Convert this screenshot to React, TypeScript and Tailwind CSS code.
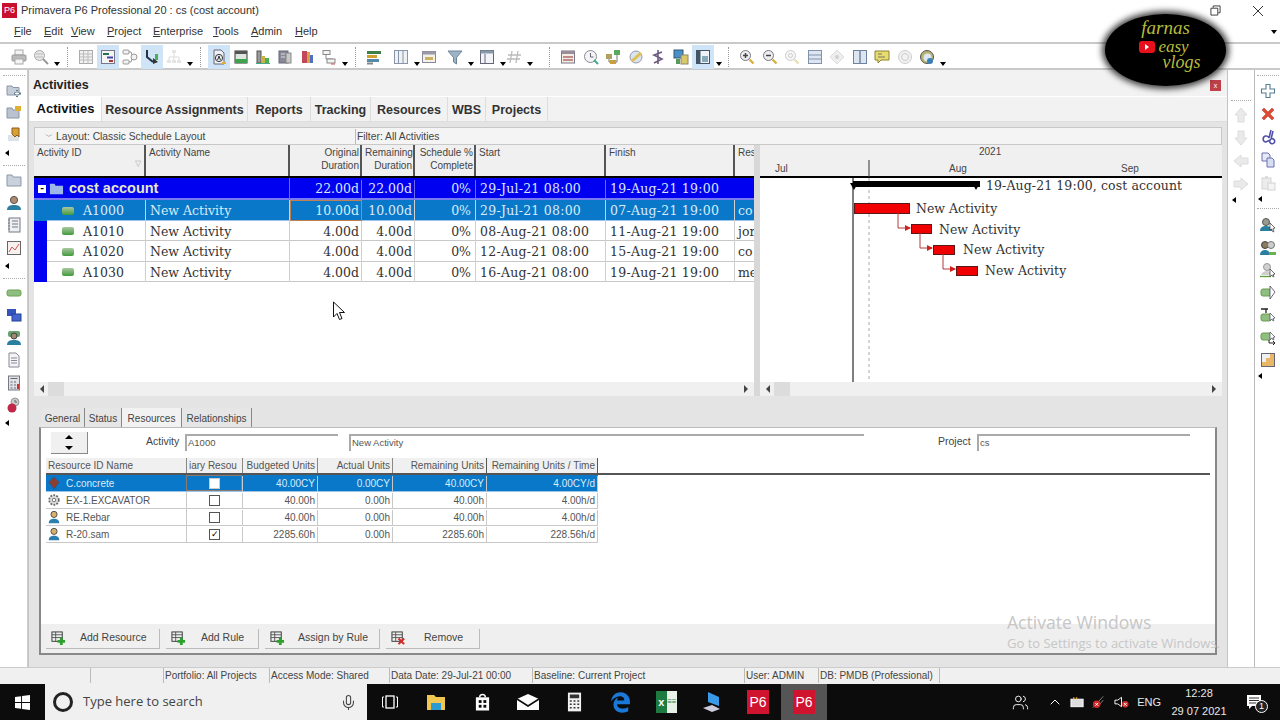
import type { ReactNode } from "react";
import { ChevronUp, Mic, Users } from "lucide-react";
import { FaEdgeLegacy } from "react-icons/fa6";

const sans = "[font-family:'Liberation_Sans',Arial,sans-serif]";
const serif = "[font-family:'DejaVu_Serif',serif]";

const Svg = ({ children, s = 16 }: { children: ReactNode; s?: number }) => (
  <svg viewBox="0 0 16 16" width={s} height={s} className="shrink-0">
    {children}
  </svg>
);

const icons: Record<string, ReactNode> = {
  printer: (
    <>
      <rect x="4" y="1" width="8" height="5" fill="#f4f4f4" stroke="#aaa" />
      <rect x="1" y="6" width="14" height="6" rx="1" fill="#bbb" stroke="#999" />
      <rect x="4" y="10" width="8" height="5" fill="#f4f4f4" stroke="#aaa" />
    </>
  ),
  preview: (
    <>
      <circle cx="6.5" cy="6.5" r="5" fill="#e6e6e6" stroke="#aaa" />
      <path d="M3 5h7M3 8h7" stroke="#bbb" />
      <path d="M10 10l5 5" stroke="#999" strokeWidth="2" />
    </>
  ),
  table: (
    <>
      <rect x="1.5" y="1.5" width="13" height="13" fill="#f2f2f2" stroke="#aaa" />
      <path d="M1.5 5h13M1.5 8h13M1.5 11h13M5.5 1.5v13M10 1.5v13" stroke="#bbb" />
    </>
  ),
  gantt: (
    <>
      <rect x="1.5" y="1.5" width="13" height="13" fill="#f4f4f4" stroke="#778" />
      <rect x="3" y="4" width="6" height="2" fill="#2a6f50" />
      <rect x="7" y="7.5" width="6" height="2" fill="#44a" />
      <rect x="9" y="11" width="4" height="2" fill="#a33" />
    </>
  ),
  net: (
    <>
      <rect x="1" y="1" width="6" height="4" rx="1" fill="#f2f2f2" stroke="#999" />
      <rect x="1" y="11" width="6" height="4" rx="1" fill="#f2f2f2" stroke="#999" />
      <circle cx="12" cy="8" r="3" fill="#f2f2f2" stroke="#999" />
      <path d="M7 3h2l1 3M7 13h2l1-3" stroke="#999" fill="none" />
    </>
  ),
  step: (
    <>
      <path d="M3 1v7l6 5" stroke="#234" strokeWidth="2" fill="none" />
      <path d="M9 9l5 4-5 2z" fill="#333" />
      <rect x="11" y="5" width="3" height="6" fill="#4caf50" />
    </>
  ),
  org: (
    <>
      <rect x="6" y="1" width="4" height="3" fill="#e4e4e4" />
      <path d="M8 4v4M3 8h10M3 8v3M8 8v3M13 8v3" stroke="#ddd" />
      <rect x="1" y="11" width="4" height="3" fill="#e4e4e4" />
      <rect x="6" y="11" width="4" height="3" fill="#e4e4e4" />
      <rect x="11" y="11" width="4" height="3" fill="#e4e4e4" />
    </>
  ),
  docA: (
    <>
      <path d="M3 1h7l3 3v11H3z" fill="#eef2f8" stroke="#667" />
      <circle cx="8" cy="9" r="3.6" fill="none" stroke="#333" />
      <path d="M6.6 11l1.4-4 1.4 4" stroke="#333" fill="none" />
      <rect x="11" y="13" width="4" height="2" fill="#e0b030" />
    </>
  ),
  greenBox: (
    <>
      <rect x="2" y="2" width="12" height="12" fill="#dfe6e0" stroke="#333" />
      <rect x="2" y="2" width="12" height="3" fill="#555" />
      <rect x="2" y="10" width="12" height="4" fill="#3fa24e" />
    </>
  ),
  bars: (
    <>
      <rect x="2" y="2" width="4" height="12" fill="#999" stroke="#555" />
      <rect x="7" y="7" width="3" height="7" fill="#c9b24a" />
      <rect x="10" y="9" width="4" height="5" fill="#4caf50" />
      <path d="M1 14.5h14" stroke="#4a8" />
    </>
  ),
  docs: (
    <>
      <rect x="2" y="2" width="9" height="12" fill="#889" stroke="#667" />
      <rect x="9" y="4" width="5" height="10" fill="#c9c9c9" stroke="#888" />
      <path d="M4 5h4M4 8h4" stroke="#ddd" />
    </>
  ),
  people: (
    <>
      <rect x="3" y="2" width="5" height="12" fill="#c0485a" />
      <rect x="8" y="3" width="3" height="11" fill="#e0a040" />
      <rect x="11" y="6" width="3" height="8" fill="#5070c0" />
    </>
  ),
  flow: (
    <>
      <rect x="2" y="1.5" width="7" height="4" fill="#f4f4f4" stroke="#888" />
      <path d="M5 6v4h7" stroke="#888" fill="none" />
      <rect x="6" y="10" width="8" height="4" fill="#f4f4f4" stroke="#888" />
      <path d="M10 15h4" stroke="#c55" />
    </>
  ),
  align: (
    <>
      <rect x="1" y="2" width="14" height="3" fill="#3f7f4a" />
      <rect x="1" y="6" width="10" height="3" fill="#d0a030" />
      <rect x="1" y="10" width="12" height="3" fill="#58a" />
      <rect x="1" y="13.5" width="6" height="2" fill="#888" />
    </>
  ),
  cols: (
    <>
      <rect x="1.5" y="1.5" width="13" height="13" fill="#eef1f6" stroke="#8894a8" />
      <path d="M5.5 1.5v13M10 1.5v13" stroke="#8894a8" />
    </>
  ),
  group: (
    <>
      <rect x="1.5" y="2.5" width="13" height="11" fill="#f2f2ea" stroke="#889" />
      <rect x="1.5" y="2.5" width="13" height="3" fill="#99a" />
      <rect x="4" y="8" width="8" height="3" fill="#d0b060" />
    </>
  ),
  filter: <path d="M1 2h14L9.5 8.5V15l-3-2V8.5z" fill="#9db4c8" stroke="#6d8496" />,
  layout: (
    <>
      <rect x="1.5" y="1.5" width="13" height="13" fill="#f2f4f7" stroke="#667" />
      <rect x="1.5" y="1.5" width="13" height="3" fill="#8899aa" />
      <path d="M6 5v9.5" stroke="#667" />
    </>
  ),
  hash: <path d="M6 2L4 14M12 2l-2 12M2 6h13M1 10h13" stroke="#bbb" strokeWidth="1.3" fill="none" />,
  tablePink: (
    <>
      <rect x="1.5" y="2" width="13" height="12" fill="#f3efe4" stroke="#778" />
      <rect x="1.5" y="2" width="13" height="3" fill="#9a8c98" />
      <path d="M3 8h10M3 11h10" stroke="#b06a6a" strokeWidth="1.5" />
    </>
  ),
  clock: (
    <>
      <circle cx="7.5" cy="7.5" r="6" fill="#f4f4f4" stroke="#889" />
      <path d="M7.5 4v4h3" stroke="#667" fill="none" />
      <path d="M11 11l4 4" stroke="#4a8" strokeWidth="2" />
    </>
  ),
  tree: (
    <>
      <rect x="9" y="1" width="6" height="5" fill="#5aa85a" />
      <rect x="1" y="5" width="6" height="5" fill="#b0a060" />
      <rect x="5" y="11" width="6" height="4" fill="#c8a040" />
      <path d="M4 10v3h1M12 6v7h-1" stroke="#777" fill="none" />
    </>
  ),
  ball: (
    <>
      <circle cx="8" cy="8" r="6" fill="#d9e4ee" stroke="#99a" />
      <path d="M4 12l9-8" stroke="#e0c050" strokeWidth="3" />
    </>
  ),
  dollar: <path d="M12 3L4 6l8 4-8 4M8 1v14" stroke="#6a5a80" strokeWidth="1.6" fill="none" />,
  pc: (
    <>
      <rect x="1" y="1" width="9" height="8" fill="#4a90c8" stroke="#357" />
      <rect x="8" y="6" width="7" height="9" fill="#d8c868" stroke="#887" />
      <rect x="3" y="10" width="4" height="5" fill="#5a9a5a" />
    </>
  ),
  panel: (
    <>
      <rect x="1.5" y="1.5" width="13" height="13" fill="#f0f4f8" stroke="#456" />
      <rect x="1.5" y="1.5" width="4" height="13" fill="#456" />
      <rect x="7" y="7" width="6" height="6" fill="#8ab" />
    </>
  ),
  zoomIn: (
    <>
      <circle cx="6.5" cy="6.5" r="5" fill="#eee" stroke="#778" />
      <path d="M4 6.5h5M6.5 4v5" stroke="#444" strokeWidth="1.5" />
      <path d="M10.5 10.5l4 4" stroke="#d8b040" strokeWidth="2.4" />
    </>
  ),
  zoomOut: (
    <>
      <circle cx="6.5" cy="6.5" r="5" fill="#eee" stroke="#778" />
      <path d="M4 6.5h5" stroke="#444" strokeWidth="1.5" />
      <path d="M10.5 10.5l4 4" stroke="#d8b040" strokeWidth="2.4" />
    </>
  ),
  zoomOff: (
    <>
      <circle cx="6.5" cy="6.5" r="5" fill="#f6f6f6" stroke="#ccc" />
      <circle cx="6.5" cy="6.5" r="2" fill="none" stroke="#ccc" />
      <path d="M10.5 10.5l4 4" stroke="#e8e0b0" strokeWidth="2.4" />
    </>
  ),
  rows: (
    <>
      <rect x="1.5" y="1.5" width="13" height="13" fill="#dde6f0" stroke="#7f93ad" />
      <path d="M1.5 6h13M1.5 10h13" stroke="#7f93ad" />
    </>
  ),
  diamond: (
    <>
      <path d="M8 1l7 7-7 7-7-7z" fill="#eee" stroke="#ddd" />
      <circle cx="8" cy="8" r="2" fill="#d0d0d0" />
    </>
  ),
  split: (
    <>
      <rect x="1.5" y="1.5" width="13" height="13" fill="#dde6f0" stroke="#6f83a0" />
      <path d="M8 1.5v13" stroke="#6f83a0" strokeWidth="1.5" />
    </>
  ),
  note: (
    <>
      <path d="M1 2h14v9H7l-3 3v-3H1z" fill="#e8dc70" stroke="#8a8230" />
      <path d="M4 5h4M4 8h7" stroke="#776" />
    </>
  ),
  helpOff: (
    <>
      <circle cx="8" cy="8" r="6.5" fill="#f2f2f2" stroke="#ccc" />
      <circle cx="8" cy="8" r="3.5" fill="none" stroke="#ccc" />
    </>
  ),
  help: (
    <>
      <circle cx="8" cy="8" r="6.5" fill="#b8b070" stroke="#555" />
      <circle cx="8.5" cy="8.5" r="4" fill="#dde8ee" />
      <circle cx="11" cy="12" r="3" fill="#3a80b8" />
    </>
  ),
  folderAdd: (
    <>
      <path d="M1 4h5l1 1.500h6V13H1z" fill="#c5cdd8" stroke="#8a96a6" />
      <path d="M11 8v7M8 11.500h7" stroke="#5a7a8a" strokeWidth="2" />
      <path d="M11 9v5M9 11.500h4" stroke="#fff" />
    </>
  ),
  folderOpen: (
    <>
      <path d="M1 3h5l1 2h6v8H1z" fill="#b9c2ce" stroke="#8a96a6" />
      <path d="M9 1h6v5H9z" fill="#e0b030" />
    </>
  ),
  marker: (
    <>
      <rect x="2" y="8" width="11" height="6" fill="#dde2e8" />
      <path d="M6 1h7v9l-2-2-2 2-3-3z" fill="#d8a030" stroke="#8a5a20" />
    </>
  ),
  folder: <path d="M1 3h5l1 2h8v9H1z" fill="#c9d1dc" stroke="#8d99a8" />,
  person: (
    <>
      <circle cx="8" cy="5" r="3.600" fill="#b08a70" stroke="#555" />
      <path d="M1 15c0-4 3-5 7-5s7 1 7 5z" fill="#2a7fa0" />
    </>
  ),
  notebook: (
    <>
      <rect x="3" y="1" width="11" height="14" fill="#eef0f2" stroke="#778" />
      <path d="M6 4h6M6 7h6M6 10h6M2 3h2M2 6h2M2 9h2M2 12h2" stroke="#778" />
    </>
  ),
  chart: (
    <>
      <rect x="1.500" y="1.500" width="13" height="13" fill="#f6f0ee" stroke="#666" />
      <path d="M3 12l3-5 3 3 4-6" stroke="#c55" fill="none" />
    </>
  ),
  bar: <rect x="1" y="5" width="14" height="6" rx="2" fill="#8fbf80" stroke="#6aa050" />,
  squares: (
    <>
      <rect x="1" y="2" width="9" height="7" fill="#3355bb" />
      <rect x="6" y="7" width="9" height="7" fill="#4466cc" stroke="#223f99" />
    </>
  ),
  personG: (
    <>
      <rect x="2" y="1" width="12" height="6" rx="2" fill="#6aa070" />
      <circle cx="8" cy="6" r="3" fill="#a08870" stroke="#444" />
      <path d="M1 15c0-4 3-5 7-5s7 1 7 5z" fill="#2a7fa0" />
    </>
  ),
  doc: (
    <>
      <path d="M3 1h7l3 3v11H3z" fill="#f4f4f4" stroke="#889" />
      <path d="M5 6h6M5 8.500h6M5 11h6" stroke="#889" />
    </>
  ),
  calc: (
    <>
      <rect x="2.500" y="1" width="11" height="14" fill="#e0e2e6" stroke="#778" />
      <path d="M4.500 3.500h7M4.500 7h2M8 7h2M4.500 10h2M8 10h2M4.500 13h2M8 13h2" stroke="#667" />
      <rect x="11" y="9" width="2" height="5" fill="#c33" />
    </>
  ),
  riskClock: (
    <>
      <circle cx="9" cy="5" r="4" fill="#c9c9c9" stroke="#999" />
      <circle cx="6" cy="11" r="4.500" fill="#c02848" />
      <path d="M9 3v2h2" stroke="#666" fill="none" />
    </>
  ),
  plus: <path d="M6 1.500h4v4.500h4.500v4H10v4.500H6V10H1.500V6H6z" fill="#fff" stroke="#557f90" strokeWidth="1.100" />,
  del: <path d="M2 4l2-2 4 4 4-4 2 2-4 4 4 4-2 2-4-4-4 4-2-2 4-4z" fill="#dd4a30" stroke="#b83020" strokeWidth=".5" />,
  scissors: <path d="M11 1L9 9M13 2l-2 8M9 9a3 3 0 1 0-3 4l4-2a2.500 2.500 0 1 0 1-1" stroke="#5050a8" strokeWidth="1.600" fill="none" />,
  copy: (
    <>
      <path d="M2 1h6l2 2v6H2z" fill="#e6eaf6" stroke="#6a70b0" />
      <path d="M7 6h5l2 2v7H7z" fill="#d8def2" stroke="#6a70b0" />
    </>
  ),
  paste: (
    <>
      <rect x="2" y="3" width="9" height="11" fill="#ececec" stroke="#d4d4d4" />
      <rect x="5" y="1" width="3" height="3" fill="#ddd" />
      <rect x="8" y="8" width="7" height="7" fill="#f4f4f4" stroke="#d4d4d4" />
    </>
  ),
  up: <path d="M8 1l6 7h-3v7H5V8H2z" fill="#eaeaea" stroke="#dcdcdc" />,
  down: <path d="M8 15l6-7h-3V1H5v7H2z" fill="#eaeaea" stroke="#dcdcdc" />,
  left: <path d="M1 8l7-6v3h7v6H8v3z" fill="#eaeaea" stroke="#dcdcdc" />,
  right: <path d="M15 8L8 2v3H1v6h7v3z" fill="#eaeaea" stroke="#dcdcdc" />,
  res1: (
    <>
      <circle cx="6" cy="5" r="3.500" fill="#9a9a90" stroke="#555" />
      <path d="M0 14c0-4 3-5 6-5s5 1 6 3v2z" fill="#2a7fa0" />
      <path d="M10 6l5 5-2 .5 1 3-1 .5-1.500-3L10 13z" fill="#fff" stroke="#333" strokeWidth=".7" />
    </>
  ),
  res2: (
    <>
      <circle cx="5" cy="5" r="3.500" fill="#8a7a60" stroke="#444" />
      <circle cx="11" cy="5" r="3.500" fill="#ccc" stroke="#777" />
      <path d="M0 15c0-4 3-5 5-5s5 1 5 5z" fill="#2a7fa0" />
      <path d="M9 12h7v3H9z" fill="#6ab04c" />
    </>
  ),
  res3: (
    <>
      <circle cx="7" cy="5" r="3.500" fill="#d0d0d0" stroke="#999" />
      <path d="M1 13c1-3 3-4 6-4s3 1 4 4z" fill="#cfcfcf" />
      <path d="M0 14.500h11" stroke="#5aa03c" strokeWidth="1.300" />
      <path d="M10 7l5 5-2 .5 1 2-1 .5-1-2-2 1.500z" fill="#fff" stroke="#333" strokeWidth=".7" />
    </>
  ),
  res4: (
    <>
      <rect x="1" y="4" width="10" height="7" rx="2" fill="#8fbf80" stroke="#6a9a50" />
      <path d="M10 1l5 6-5 7z" fill="#fff" stroke="#445" strokeWidth=".8" />
    </>
  ),
  res5: (
    <>
      <path d="M1 2h7M6 2v4" stroke="#222" strokeWidth="1.300" fill="none" />
      <rect x="1" y="7" width="10" height="7" rx="2" fill="#8fbf80" stroke="#6a9a50" />
      <path d="M10 6l5 5-2 .5 1 2-1 .5-1-2-2 1.500z" fill="#fff" stroke="#445" strokeWidth=".7" />
    </>
  ),
  res6: (
    <>
      <rect x="1" y="3" width="10" height="7" rx="2" fill="#8fbf80" stroke="#6a9a50" />
      <path d="M9 13h6M13 11l2 2-2 2M9 10v3" stroke="#222" fill="none" />
      <path d="M10 2l5 5-2 .5 1 2-1 .5-1-2-2 1.500z" fill="#fff" stroke="#445" strokeWidth=".7" />
    </>
  ),
  stairs: (
    <>
      <rect x="1.500" y="1.500" width="13" height="13" fill="#eef0f4" stroke="#667" />
      <path d="M2 14V10h4V6h4V2h4v12z" fill="#e8b868" />
    </>
  ),
  addRow: (
    <>
      <rect x="1" y="1" width="11" height="10" fill="#eef0f0" stroke="#333" />
      <path d="M1 4h11M1 7h11M5 1v10" stroke="#555" />
      <path d="M11 7v8M7 11h8" stroke="#2da02d" strokeWidth="3" />
    </>
  ),
  removeRow: (
    <>
      <rect x="1" y="1" width="11" height="10" fill="#eef0f0" stroke="#333" />
      <path d="M1 4h11M1 7h11M5 1v10" stroke="#555" />
      <path d="M8 8l6 6M14 8l-6 6" stroke="#d02a2a" strokeWidth="2.200" />
    </>
  ),
};

const Icon = ({ n, s }: { n: string; s?: number }) => <Svg s={s}>{icons[n]}</Svg>;

const Caret = () => (
  <span className="ml-[2px] mt-[14px] h-0 w-0 shrink-0 border-x-[3px] border-t-[4px] border-x-transparent border-t-black" />
);

const SideCaret = () => (
  <span className="block h-0 w-0 border-y-[3px] border-r-[4px] border-y-transparent border-r-black" />
);

const Sep = () => <span className="mx-[7px] h-[20px] shrink-0 border-l border-dotted border-[#999]" />;

const Tb = ({ n, on }: { n: string; on?: boolean }) => (
  <span className={`flex h-[24px] w-[22px] shrink-0 items-center justify-center ${on ? "bg-[#cfe4f7]" : ""}`}>
    <Icon n={n} />
  </span>
);

const Toolbar = () => (
  <div className="flex h-[26px] items-center border-b-2 border-[#c9c9c9] pl-[8px] pt-[1px]">
    <Tb n="printer" />
    <Tb n="preview" />
    <Caret />
    <Sep />
    <Tb n="table" />
    <Tb n="gantt" on />
    <Tb n="net" />
    <Tb n="step" on />
    <Tb n="org" />
    <Caret />
    <Sep />
    <Tb n="docA" on />
    <Tb n="greenBox" />
    <Tb n="bars" />
    <Tb n="docs" />
    <Tb n="people" />
    <Tb n="flow" />
    <Caret />
    <Sep />
    <Tb n="align" />
    <span className="w-[5px]" />
    <Tb n="cols" />
    <Caret />
    <span className="-ml-[2px]" />
    <Tb n="group" />
    <span className="w-[4px]" />
    <Tb n="filter" />
    <Caret />
    <span className="w-[2px]" />
    <Tb n="layout" />
    <Caret />
    <span className="-ml-[3px]" />
    <Tb n="hash" />
    <Caret />
    <span className="w-[9px]" />
    <Sep />
    <div className="flex gap-[.5px]">
      <Tb n="tablePink" />
      <Tb n="clock" />
      <Tb n="tree" />
      <Tb n="ball" />
      <Tb n="dollar" />
      <Tb n="pc" />
      <Tb n="panel" on />
    </div>
    <Caret />
    <span className="-ml-[1px]" />
    <Sep />
    <div className="flex gap-[.5px]">
      <Tb n="zoomIn" />
      <Tb n="zoomOut" />
      <Tb n="zoomOff" />
      <Tb n="rows" />
      <Tb n="diamond" />
      <Tb n="split" />
      <Tb n="note" />
      <Tb n="helpOff" />
      <Tb n="help" />
    </div>
    <Caret />
  </div>
);

const menus = [
  ["F", "ile", "w-[30px]"],
  ["E", "dit", "w-[27px]"],
  ["V", "iew", "w-[36px]"],
  ["P", "roject", "w-[46px]"],
  ["E", "nterprise", "w-[60px]"],
  ["T", "ools", "w-[38px]"],
  ["A", "dmin", "w-[44px]"],
  ["H", "elp", "w-[30px]"],
];

const LeftBar = () => {
  const groups = [
    ["folderAdd", "folderOpen", "marker"],
    ["folder", "person", "notebook", "chart"],
    ["bar", "squares", "personG", "doc", "calc", "riskClock"],
  ];
  return (
    <div className="flex w-[28px] shrink-0 flex-col items-center border-r border-[#ccc] pt-[5px]">
      {groups.map((g, i) => (
        <div key={i} className="mb-[9px] flex w-full flex-col items-center">
          <span className="mb-[6px] w-[22px] border-t border-dotted border-[#aaa]" />
          <div className="flex flex-col items-center gap-[6.500px]">
            {g.map((n) => <Icon key={n} n={n} />)}
          </div>
          <span className="mt-[7px] self-start pl-[5px]"><SideCaret /></span>
        </div>
      ))}
    </div>
  );
};

const RightBars = () => (
  <>
    <div className="flex w-[27px] shrink-0 flex-col items-center border-r border-[#bbb] pt-[30px]">
      <span className="mb-[6px] w-[20px] border-t border-dotted border-[#aaa]" />
      <div className="flex flex-col items-center gap-[7px]">
        {["up", "down", "left", "right"].map((n) => <Icon key={n} n={n} />)}
      </div>
      <span className="mt-[5px] self-start pl-[4px]"><SideCaret /></span>
    </div>
    <div className="flex w-[25px] shrink-0 flex-col items-center pt-[5px]">
      <span className="mb-[7px] w-[22px] border-t border-dotted border-[#aaa]" />
      <div className="flex flex-col items-center gap-[7px]">
        {["plus", "del", "scissors", "copy", "paste"].map((n) => <Icon key={n} n={n} />)}
      </div>
      <span className="mt-[5px] self-start pl-[3px]"><SideCaret /></span>
      <span className="mb-[8px] mt-[6px] w-[22px] border-t border-dotted border-[#aaa]" />
      <div className="flex flex-col items-center gap-[6.500px]">
        {["res1", "res2", "res3", "res4", "res5", "res6", "stairs"].map((n) => <Icon key={n} n={n} />)}
      </div>
      <span className="mt-[5px] self-start pl-[3px]"><SideCaret /></span>
    </div>
  </>
);

const cols = "grid grid-cols-[112px_144px_72px_53px_61px_130px_129px_19px]";

const headers: [string, string?][] = [
  ["Activity ID"],
  ["Activity Name"],
  ["Original\nDuration", "r"],
  ["Remaining\nDuration", "r"],
  ["Schedule %\nComplete", "r"],
  ["Start"],
  ["Finish"],
  ["Res"],
];

const rows = [
  { id: "A1000", dur: "10.00d", start: "29-Jul-21 08:00", finish: "07-Aug-21 19:00", res: "co", sel: true },
  { id: "A1010", dur: "4.00d", start: "08-Aug-21 08:00", finish: "11-Aug-21 19:00", res: "jor", sel: false },
  { id: "A1020", dur: "4.00d", start: "12-Aug-21 08:00", finish: "15-Aug-21 19:00", res: "co", sel: false },
  { id: "A1030", dur: "4.00d", start: "16-Aug-21 08:00", finish: "19-Aug-21 19:00", res: "me", sel: false },
];

const ActivityTable = () => (
  <div className="flex w-[720px] shrink-0 flex-col">
    <div className={`${cols} h-[33px] border-b-2 border-black bg-[#f0f0f0]`}>
      {headers.map(([t, a]) => (
        <div
          key={t}
          className={`relative overflow-hidden whitespace-pre border-r-2 border-[#555] px-[3px] pt-[1px] text-[10px] leading-[13px] text-[#444] last:border-r-0 ${a ? "pr-[1px] text-right" : ""}`}
        >
          {t}
          {t === "Activity ID" && (
            <span className="absolute right-[3px] top-[12px] text-[8px] text-[#aaa]">▽</span>
          )}
        </div>
      ))}
    </div>
    <div className={`${cols} h-[22px] items-center border-b-2 border-[#7a7af0] bg-[#0000f0] pb-[1px] text-[12.500px] text-[#dfe4ff] ${serif}`}>
      <div className="col-span-2 flex items-center border-r border-[#6a6af0]">
        <span className="ml-[4px] flex h-[8px] w-[8px] items-center justify-center bg-white text-[9px] font-bold leading-none text-black">-</span>
        <span className="ml-[3px]"><Svg s={15}><path d="M1 3h5l1 2h8v9H1z" fill="#9db8e8" /></Svg></span>
        <span className={`ml-[5px] text-[14.500px] font-bold text-[#e6e8c8] ${sans}`}>cost account</span>
      </div>
      <div className="border-r border-[#6a6af0] pr-[2px] text-right">22.00d</div>
      <div className="border-r border-[#6a6af0] pr-[2px] text-right">22.00d</div>
      <div className="border-r border-[#6a6af0] pr-[4px] text-right">0%</div>
      <div className="overflow-hidden whitespace-nowrap border-r border-[#6a6af0] pl-[4px] tracking-[.25px]">29-Jul-21 08:00</div>
      <div className="overflow-hidden whitespace-nowrap pl-[4px] tracking-[.25px]">19-Aug-21 19:00</div>
      <div />
    </div>
    {rows.map((r, i) => (
      <div
        key={r.id}
        className={`${cols} h-[20.500px] items-stretch border-b text-[12.500px] leading-[21px] ${serif} ${r.sel ? "border-[#9cc4e8] bg-[#0a78c8] text-[#d8ecfa]" : "border-[#c8c8c8] bg-white text-[#333]"}`}
      >
        <div className="flex items-center border-r border-[#d0d0d0]">
          <span className={`h-full w-[13px] shrink-0 ${r.sel ? "bg-[#0a78c8]" : "bg-[#0000f0]"}`} />
          <span className="ml-[15px] h-[8px] w-[12px] rounded-[2px] bg-gradient-to-b from-[#a8c8a0] to-[#3f9a3c]" />
          <span className="ml-[9px]">{r.id}</span>
        </div>
        <div className="border-r border-[#d0d0d0] pl-[4px]">New Activity</div>
        <div className={`border-r border-[#d0d0d0] pr-[2px] text-right ${i === 0 ? "outline outline-1 -outline-offset-1 outline-[#c08050]" : ""}`}>{r.dur}</div>
        <div className="border-r border-[#d0d0d0] pr-[2px] text-right">{r.dur}</div>
        <div className="border-r border-[#d0d0d0] pr-[4px] text-right">0%</div>
        <div className="overflow-hidden whitespace-nowrap border-r border-[#d0d0d0] pl-[4px] tracking-[.25px]">{r.start}</div>
        <div className="overflow-hidden whitespace-nowrap border-r border-[#d0d0d0] pl-[4px] tracking-[.25px]">{r.finish}</div>
        <div className="overflow-hidden pl-[3px]">{r.res}</div>
      </div>
    ))}
    <div className="flex-1 bg-white" />
  </div>
);

const ganttBars = [
  { x: 94, y: 58, w: 55, h: 10 },
  { x: 151, y: 79, w: 20, h: 9 },
  { x: 173, y: 100, w: 21, h: 9 },
  { x: 196, y: 121, w: 21, h: 9 },
];

const ganttLabels = [
  { x: 156, y: 55 },
  { x: 179, y: 76 },
  { x: 203, y: 96 },
  { x: 225, y: 117 },
];

const Gantt = () => (
  <div className="relative h-[237px] w-[462px] shrink-0 overflow-hidden bg-white">
    <div className="absolute left-0 top-0 h-[33px] w-full border-b-2 border-black bg-[#f0f0f0] text-[10px] text-[#444]">
      <span className="absolute left-[219px] -top-[1px]">2021</span>
      <span className="absolute left-[15px] top-[16px]">Jul</span>
      <span className="absolute left-[189px] top-[16px]">Aug</span>
      <span className="absolute left-[361px] top-[16px]">Sep</span>
    </div>
    <svg className="absolute left-0 top-0" width="462" height="237">
      <path d="M109 15v17" stroke="#333" />
      <path d="M93 33v204" stroke="#555" strokeWidth="1.500" />
      <path d="M109 33v204" stroke="#aaa" strokeDasharray="3 3" />
      <rect x="93" y="36" width="127" height="6" fill="#000" />
      <path d="M90 38h8l-4 7zM212 38h8l-4 7z" fill="#000" />
      {ganttBars.map((b) => (
        <rect key={b.x} x={b.x + 0.5} y={b.y + 0.5} width={b.w} height={b.h} fill="#f00000" stroke="#5a1818" />
      ))}
      <path d="M138 68v15h12M160 88v15h12M183 109v15h12" stroke="#b43838" fill="none" />
      <path d="M145 80l6 3-6 3zM167 100l6 3-6 3zM190 121l6 3-6 3z" fill="#d02020" />
    </svg>
    <span className={`absolute left-[226px] top-[32px] whitespace-nowrap text-[12.500px] tracking-[.1px] text-[#333] ${serif}`}>19-Aug-21 19:00, cost account</span>
    {ganttLabels.map((l) => (
      <span
        key={l.x}
        className={`absolute whitespace-nowrap text-[12.500px] text-[#333] ${serif}`}
        style={{ left: l.x, top: l.y }}
      >
        New Activity
      </span>
    ))}
  </div>
);

const ScrollBar = ({ w }: { w: string }) => (
  <div className={`flex h-[14px] items-center bg-[#f0f0f0] px-[6px] ${w}`}>
    <span className="h-0 w-0 border-y-[4px] border-r-[4px] border-y-transparent border-r-[#444]" />
    <span className="ml-[4px] h-full w-[16px] bg-[#dcdcdc]" />
    <span className="flex-1" />
    <span className="h-0 w-0 border-y-[4px] border-l-[4px] border-y-transparent border-l-[#444]" />
  </div>
);

const TopPane = () => (
  <div className="flex h-[269px] shrink-0 flex-col">
    <div className="flex h-[18px] items-center border border-[#c8c8c8] bg-[#f4f4f4] pt-[1px] text-[10.300px] text-[#444]">
      <div className="flex h-full w-[321px] items-center border-r border-[#bbb] pl-[10px]">
        <span className="mr-[3px] text-[8px] text-[#777]">﹀</span>
        Layout: Classic Schedule Layout
      </div>
      <span className="pl-[1px]">Filter: All Activities</span>
    </div>
    <div className="flex">
      <ActivityTable />
      <div className="w-[6px] shrink-0 bg-[#d8d8d8]" />
      <Gantt />
    </div>
    <div className="flex">
      <ScrollBar w="w-[720px]" />
      <div className="w-[6px] bg-[#d8d8d8]" />
      <ScrollBar w="w-[462px]" />
    </div>
  </div>
);

const resCols = "grid grid-cols-[140px_56px_75px_75px_94px_112px]";

const resources = [
  { name: "C.concrete", icon: "mat", bud: "40.00CY", act: "0.00CY", rem: "40.00CY", rate: "4.00CY/d", chk: false, sel: true },
  { name: "EX-1.EXCAVATOR", icon: "eq", bud: "40.00h", act: "0.00h", rem: "40.00h", rate: "4.00h/d", chk: false, sel: false },
  { name: "RE.Rebar", icon: "man", bud: "40.00h", act: "0.00h", rem: "40.00h", rate: "4.00h/d", chk: false, sel: false },
  { name: "R-20.sam", icon: "man", bud: "2285.60h", act: "0.00h", rem: "2285.60h", rate: "228.56h/d", chk: true, sel: false },
];

const ResIcon = ({ kind }: { kind: string }) => (
  <Svg s={14}>
    {kind === "mat" && <path d="M8 1l6 6-6 8-6-8z" fill="#8a3f30" stroke="#2a5a90" />}
    {kind === "eq" && (
      <>
        <circle cx="8" cy="8" r="5.500" fill="#ddd" stroke="#666" strokeWidth="2" strokeDasharray="2 1.500" />
        <circle cx="8" cy="8" r="2" fill="#fff" stroke="#666" />
      </>
    )}
    {kind === "man" && (
      <>
        <circle cx="8" cy="5" r="3.500" fill="#d8b070" stroke="#444" />
        <path d="M2 15c0-4 3-5 6-5s6 1 6 5z" fill="#2a7fb0" />
      </>
    )}
  </Svg>
);

const Field = ({ w, children }: { w: string; children: ReactNode }) => (
  <div className={`flex h-[17px] items-center border-l-2 border-t-2 border-[#aaa] bg-white pl-[1px] text-[9.500px] text-[#555] ${w}`}>
    {children}
  </div>
);

const Btn = ({ w, icon, label, gap }: { w: string; icon: string; label: string; gap: string }) => (
  <div className={`flex h-[20px] items-center border-b border-r border-[#bbb] bg-[#f0f0f0] pl-[5px] text-[10.500px] text-[#444] ${w}`}>
    <Icon n={icon} s={15} />
    <span className={gap}>{label}</span>
  </div>
);

const BottomPane = () => (
  <div className="mx-[10px] flex h-[250px] flex-col">
    <div className="flex h-[22px] items-end pl-[2px] text-[10px] text-[#444]">
      {[
        ["General", "w-[44px]"],
        ["Status", "w-[37px]"],
        ["Resources", "w-[60px]"],
        ["Relationships", "w-[70px]"],
      ].map(([t, w]) => (
        <span
          key={t}
          className={`flex h-[19px] items-center justify-center border-r border-[#888] pt-[1px] ${w} ${t === "Resources" ? "bg-[#f2f2f2]" : "bg-[#e6e6e6]"}`}
        >
          {t}
        </span>
      ))}
    </div>
    <div className="flex flex-1 flex-col border-x-2 border-b-2 border-[#888] border-t border-t-[#bbb] bg-white">
      <div className="flex h-[30px] items-center pb-[2px] text-[10px] text-[#444]">
        <div className="ml-[10px] mt-[2px] flex h-[22px] w-[37px] flex-col items-center justify-around border-b border-r border-[#888] bg-[#f0f0f0]">
          <span className="h-0 w-0 border-x-[4px] border-b-[4px] border-x-transparent border-b-black" />
          <span className="h-0 w-0 border-x-[4px] border-t-[4px] border-x-transparent border-t-black" />
        </div>
        <span className="ml-[58px] w-[39px] text-[10.500px]">Activity</span>
        <Field w="w-[153px]">A1000</Field>
        <Field w="ml-[11px] w-[515px]">New Activity</Field>
        <span className="ml-[74px] w-[39px] text-[10.500px]">Project</span>
        <Field w="w-[213px]">cs</Field>
      </div>
      <div className="mx-[5px] border-b-2 border-[#555]">
        <div className={`${resCols} h-[15px] w-[552px] items-center bg-[#f0f0f0] text-[10px] text-[#555]`}>
          <div className="pl-[2px]">Resource ID Name</div>
          <div className="overflow-hidden whitespace-nowrap border-l border-[#888] pl-[2px]">iary Resou</div>
          <div className="border-l border-[#888] pr-[2px] text-right">Budgeted Units</div>
          <div className="border-l border-[#888] pr-[2px] text-right">Actual Units</div>
          <div className="border-l border-[#888] pr-[2px] text-right">Remaining Units</div>
          <div className="overflow-hidden whitespace-nowrap border-x border-[#555] pr-[2px] text-right">Remaining Units / Time</div>
        </div>
      </div>
      <div className="ml-[5px] w-[552px] text-[10px]">
        {resources.map((r) => (
          <div
            key={r.name}
            className={`${resCols} h-[17px] items-center border-b ${r.sel ? "border-[#9cc4e8] bg-[#0a78c8] text-[#d8ecfa]" : "border-[#c8c8c8] text-[#555]"}`}
          >
            <div className="flex items-center gap-[5px] pl-[1px]">
              <ResIcon kind={r.icon} />
              <span>{r.name}</span>
            </div>
            <div className={`flex h-full items-center justify-center border-l border-[#c8c8c8] ${r.sel ? "outline outline-1 -outline-offset-1 outline-[#8a7a70]" : ""}`}>
              <span className={`flex h-[11px] w-[11px] items-center justify-center border border-[#555] text-[9px] leading-none text-black ${r.sel ? "border-[#ccc] bg-white" : ""}`}>
                {r.chk ? "✓" : ""}
              </span>
            </div>
            <div className="border-l border-[#c8c8c8] pr-[2px] text-right">{r.bud}</div>
            <div className="border-l border-[#c8c8c8] pr-[2px] text-right">{r.act}</div>
            <div className="border-l border-[#c8c8c8] pr-[2px] text-right">{r.rem}</div>
            <div className="border-x border-[#c8c8c8] pr-[2px] text-right">{r.rate}</div>
          </div>
        ))}
      </div>
      <div className="flex-1" />
      <div className="flex h-[29px] items-center gap-[6px] bg-[#efefef] pl-[5px]">
        <Btn w="w-[114px]" icon="addRow" label="Add Resource" gap="ml-[14px]" />
        <Btn w="w-[93px]" icon="addRow" label="Add Rule" gap="ml-[15px]" />
        <Btn w="w-[115px]" icon="addRow" label="Assign by Rule" gap="ml-[13px]" />
        <Btn w="w-[94px]" icon="removeRow" label="Remove" gap="ml-[18px]" />
      </div>
    </div>
  </div>
);

const statusCells = [
  ["", "w-[73px]"],
  ["Portfolio: All Projects", "w-[103px]"],
  ["Access Mode: Shared", "ml-[3px] w-[116px]"],
  ["Data Date: 29-Jul-21 00:00", "ml-[4px] w-[140px]"],
  ["Baseline: Current Project", "ml-[3px] w-[212px]"],
  ["User: ADMIN", "w-[74px]"],
  ["DB: PMDB (Professional)", "w-[121px]"],
  ["", "w-[96px]"],
];

const TaskIcon = ({ children, active }: { children: ReactNode; active?: boolean }) => (
  <span className={`flex h-full w-[46px] items-center justify-center ${active ? "bg-[#555]" : ""}`}>{children}</span>
);

const P6 = () => (
  <span className="flex h-[24px] w-[22px] items-center justify-center bg-[#d01430] text-[14px] font-normal text-white">P6</span>
);

const Taskbar = () => (
  <div className={`flex h-[36px] shrink-0 items-center bg-[#0c0c0c] text-white ${sans}`}>
    <span className="flex h-full w-[45px] items-center justify-center">
      <svg viewBox="0 0 16 16" width="15" height="15">
        <path d="M0 2.200L6.500 1.300V7.500H0zM7.500 1.100L16 0V7.500H7.500zM0 8.500H6.500V14.700L0 13.800zM7.500 8.500H16V16L7.500 14.900z" fill="#fff" />
      </svg>
    </span>
    <div className="flex h-full w-[322px] items-center bg-[#f0f0f0] pl-[8px] text-[#333]">
      <span className="h-[20px] w-[20px] rounded-full border-[3px] border-[#222]" />
      <span className="ml-[10px] text-[13px] text-[#444] [font-family:'Open_Sans',sans-serif]">Type here to search</span>
      <span className="ml-auto mr-[10px]"><Mic size={17} strokeWidth={1.500} color="#444" /></span>
    </div>
    <TaskIcon>
      <svg viewBox="0 0 18 16" width="18" height="16">
        <rect x="5" y="2" width="8" height="12" fill="none" stroke="#fff" strokeWidth="1.300" />
        <path d="M3 3H1.500v10H3M15 3h1.500v10H15" fill="none" stroke="#fff" />
      </svg>
    </TaskIcon>
    <TaskIcon>
      <svg viewBox="0 0 20 18" width="20" height="18">
        <path d="M1 2h7l2 2h9v13H1z" fill="#f0c850" />
        <rect x="5" y="10" width="10" height="7" fill="#2a9ad0" />
      </svg>
    </TaskIcon>
    <TaskIcon>
      <svg viewBox="0 0 18 20" width="17" height="20">
        <path d="M2 5h14v14H2z" fill="#fff" />
        <path d="M6 5a3 3 0 0 1 6 0" fill="none" stroke="#fff" strokeWidth="1.500" />
        <rect x="5" y="8" width="3" height="3" fill="#0c0c0c" />
        <rect x="10" y="8" width="3" height="3" fill="#0c0c0c" />
        <rect x="5" y="13" width="3" height="3" fill="#0c0c0c" />
        <rect x="10" y="13" width="3" height="3" fill="#0c0c0c" />
      </svg>
    </TaskIcon>
    <TaskIcon>
      <svg viewBox="0 0 22 16" width="22" height="16">
        <path d="M0 5L11 0l11 5v11H0z" fill="#fff" />
        <path d="M0 5l11 7 11-7" fill="none" stroke="#0c0c0c" strokeWidth="1.500" />
      </svg>
    </TaskIcon>
    <TaskIcon>
      <svg viewBox="0 0 16 20" width="15" height="20">
        <rect x="1" y="0" width="14" height="20" fill="#f2f2f2" />
        <rect x="3" y="2" width="10" height="4" fill="#333" />
        <path d="M3 9h2M7 9h2M11 9h2M3 12.500h2M7 12.500h2M11 12.500h2M3 16h2M7 16h2M11 16h2" stroke="#333" strokeWidth="1.600" />
      </svg>
    </TaskIcon>
    <TaskIcon><FaEdgeLegacy size={21} color="#1a78d8" /></TaskIcon>
    <TaskIcon>
      <span className="flex h-[22px] w-[21px] items-center bg-[#e8f0e8]">
        <span className="flex h-full w-[12px] items-center justify-center bg-[#1d7a40] text-[11px] font-bold text-white">x</span>
        <span className="flex-1 text-center text-[8px] leading-[6px] text-[#1d7a40]">≡≡</span>
      </span>
    </TaskIcon>
    <TaskIcon>
      <svg viewBox="0 0 20 22" width="20" height="22">
        <path d="M6 1l11 5v9L6 11z" fill="#3a9ae8" />
        <path d="M1 17l9-3 8 4-8 3z" fill="#ccd" />
      </svg>
    </TaskIcon>
    <TaskIcon><P6 /></TaskIcon>
    <TaskIcon active><P6 /></TaskIcon>
    <div className="flex-1" />
    <Users size={17} strokeWidth={1.300} className="mr-[18px]" />
    <ChevronUp size={16} strokeWidth={1.500} className="mr-[7px]" />
    <svg viewBox="0 0 16 12" width="15" height="12" className="mr-[7px]">
      <rect x="1" y="3" width="13" height="8" fill="#ddd" stroke="#fff" />
      <path d="M4 3V1M7 3V1" stroke="#e0a030" strokeWidth="1.500" />
    </svg>
    <svg viewBox="0 0 16 14" width="15" height="14" className="mr-[7px]">
      <path d="M1 13L12 1M5 13l7-8" stroke="#888" />
      <circle cx="5" cy="9.500" r="4" fill="#d02828" />
      <path d="M3.500 8l3 3M6.500 8l-3 3" stroke="#fff" />
    </svg>
    <svg viewBox="0 0 16 14" width="15" height="14" className="mr-[8px]">
      <path d="M1 5h3l4-3v10L4 9H1z" fill="none" stroke="#fff" />
      <circle cx="12" cy="9.500" r="3.500" fill="#d02828" />
      <path d="M10.500 8l3 3M13.500 8l-3 3" stroke="#fff" />
    </svg>
    <span className="mr-[10px] text-[11px] text-[#e8e8e8]">ENG</span>
    <div className="mr-[19px] flex w-[56px] flex-col items-center text-[11px] leading-[18px] text-[#e8e8e8]">
      <span>12:28</span>
      <span className="whitespace-nowrap">29 07 2021</span>
    </div>
    <span className="relative mr-[18px]">
      <svg viewBox="0 0 16 16" width="16" height="16">
        <path d="M1 1h14v11H6l-3 3v-3H1z" fill="#fff" />
        <path d="M3 4h10M3 6.500h10M3 9h7" stroke="#333" />
      </svg>
      <span className="absolute -bottom-[3px] -right-[6px] flex h-[13px] w-[13px] items-center justify-center rounded-full border border-white bg-[#222] text-[9px]">1</span>
    </span>
  </div>
);

export default function App() {
  return (
    <div className={`relative flex h-[720px] w-[1280px] flex-col overflow-hidden bg-white ${sans}`}>
      <div className="flex h-[21px] shrink-0 items-center">
        <span className="ml-[2px] flex h-[15px] w-[15px] items-center justify-center bg-[#c8102e] text-[9px] text-white">P6</span>
        <span className="ml-[4px] text-[11px] text-[#333]">Primavera P6 Professional 20 : cs (cost account)</span>
        <span className="ml-auto mr-[31px]">
          <svg viewBox="0 0 12 12" width="11" height="11">
            <path d="M3.500 3V1H11v7.500H9M1 3.500h7.500V11H1z" fill="none" stroke="#333" />
          </svg>
        </span>
        <span className="mr-[16px]">
          <svg viewBox="0 0 12 12" width="12" height="12">
            <path d="M1 1l10 10M11 1L1 11" stroke="#333" />
          </svg>
        </span>
      </div>
      <div className="flex h-[23px] shrink-0 items-center border-b-2 border-[#c9c9c9] pl-[14px] text-[11px] text-[#333]">
        {menus.map(([k, rest, w]) => (
          <span key={k + rest} className={`${w} shrink-0`}>
            <span className="underline">{k}</span>
            {rest}
          </span>
        ))}
        <span className="ml-auto mr-[3px] h-0 w-0 border-x-[3px] border-t-[4px] border-x-transparent border-t-black" />
      </div>
      <Toolbar />
      <div className="flex min-h-0 flex-1">
        <LeftBar />
        <div className="flex w-[1200px] shrink-0 flex-col border-x border-[#c4c4c4] bg-[#e4e4e4]">
          <div className="flex h-[27px] shrink-0 items-center justify-between border-b border-white bg-[#f2f2f2] pl-[4px] pr-[6px] pt-[4px]">
            <span className="text-[12.500px] font-bold text-[#222]">Activities</span>
            <span className="flex h-[11px] w-[11px] items-center justify-center bg-[#c0404a] text-[7px] leading-none text-white">x</span>
          </div>
          <div className="flex h-[25px] shrink-0 items-center border-b border-[#ddd] bg-[#f2f2f2] pl-[1px] text-[12.500px] font-bold text-[#333]">
            <span className="flex h-full w-[72px] items-center justify-center border-r border-[#ddd] bg-white text-[13px] text-[#111]">Activities</span>
            <span className="flex h-[24px] w-[146px] items-center justify-center border-r border-[#ddd] pt-[3px]">Resource Assignments</span>
            <span className="flex h-[24px] w-[63px] items-center justify-center border-r border-[#ddd] pt-[3px]">Reports</span>
            <span className="flex h-[24px] w-[60px] items-center justify-center border-r border-[#ddd] pt-[3px]">Tracking</span>
            <span className="flex h-[24px] w-[77px] items-center justify-center border-r border-[#ddd] pt-[3px]">Resources</span>
            <span className="flex h-[24px] w-[38px] items-center justify-center border-r border-[#ddd] pt-[3px]">WBS</span>
            <span className="flex h-[24px] w-[62px] items-center justify-center border-r border-[#ddd] pt-[3px]">Projects</span>
          </div>
          <div className="px-[5px] pt-[5px]">
            <TopPane />
          </div>
          <div className="h-[9px] shrink-0" />
          <BottomPane />
        </div>
        <RightBars />
      </div>
      <div className="flex h-[17px] shrink-0 items-center border-t border-[#ccc] bg-[#f0f0f0] pb-[1px] pl-[90px] text-[10px] text-[#444]">
        {statusCells.map(([t, w], i) => (
          <span key={i} className={`flex h-full items-center overflow-hidden whitespace-nowrap border-l border-[#bbb] pl-[1px] ${w}`}>
            {t}
          </span>
        ))}
      </div>
      <Taskbar />

      {/* channel watermark over the window */}
      <div className="absolute left-[1105px] top-[14px] h-[72px] w-[121px] rounded-[50%] bg-black shadow-[0_0_6px_3px_rgba(0,0,0,.75)]">
        <div className="flex flex-col items-center pt-[5px] text-[19px] italic leading-[18px] text-[#b8bc3c] [font-family:'Liberation_Serif',serif]">
          <span>farnas</span>
          <span className="relative ml-[16px] mt-[1px] text-[17px]">
            <span className="absolute -left-[19px] top-[3px] flex h-[12px] w-[16px] items-center justify-center rounded-[3px] bg-[#e8101c]">
              <span className="h-0 w-0 border-y-[3px] border-l-[4px] border-y-transparent border-l-white" />
            </span>
            easy
          </span>
          <span className="-mt-[3px] ml-[32px] text-[18px]">vlogs</span>
        </div>
      </div>

      {/* mouse pointer */}
      <svg className="absolute left-[332px] top-[301px]" width="14" height="20" viewBox="0 0 14 20">
        <path d="M1.500 1v15l3.500-3.500 2.500 6 2.500-1-2.500-6h5z" fill="#fff" stroke="#111" />
      </svg>

      {/* activation notice */}
      <div className="absolute left-[1007px] top-[611px] whitespace-nowrap text-[#c6c6c6] [font-family:'Open_Sans',sans-serif]">
        <div className="text-[17.600px] leading-[22px]">Activate Windows</div>
        <div className="mt-[2px] text-[13px] leading-[17px]">Go to Settings to activate Windows.</div>
      </div>
    </div>
  );
}
